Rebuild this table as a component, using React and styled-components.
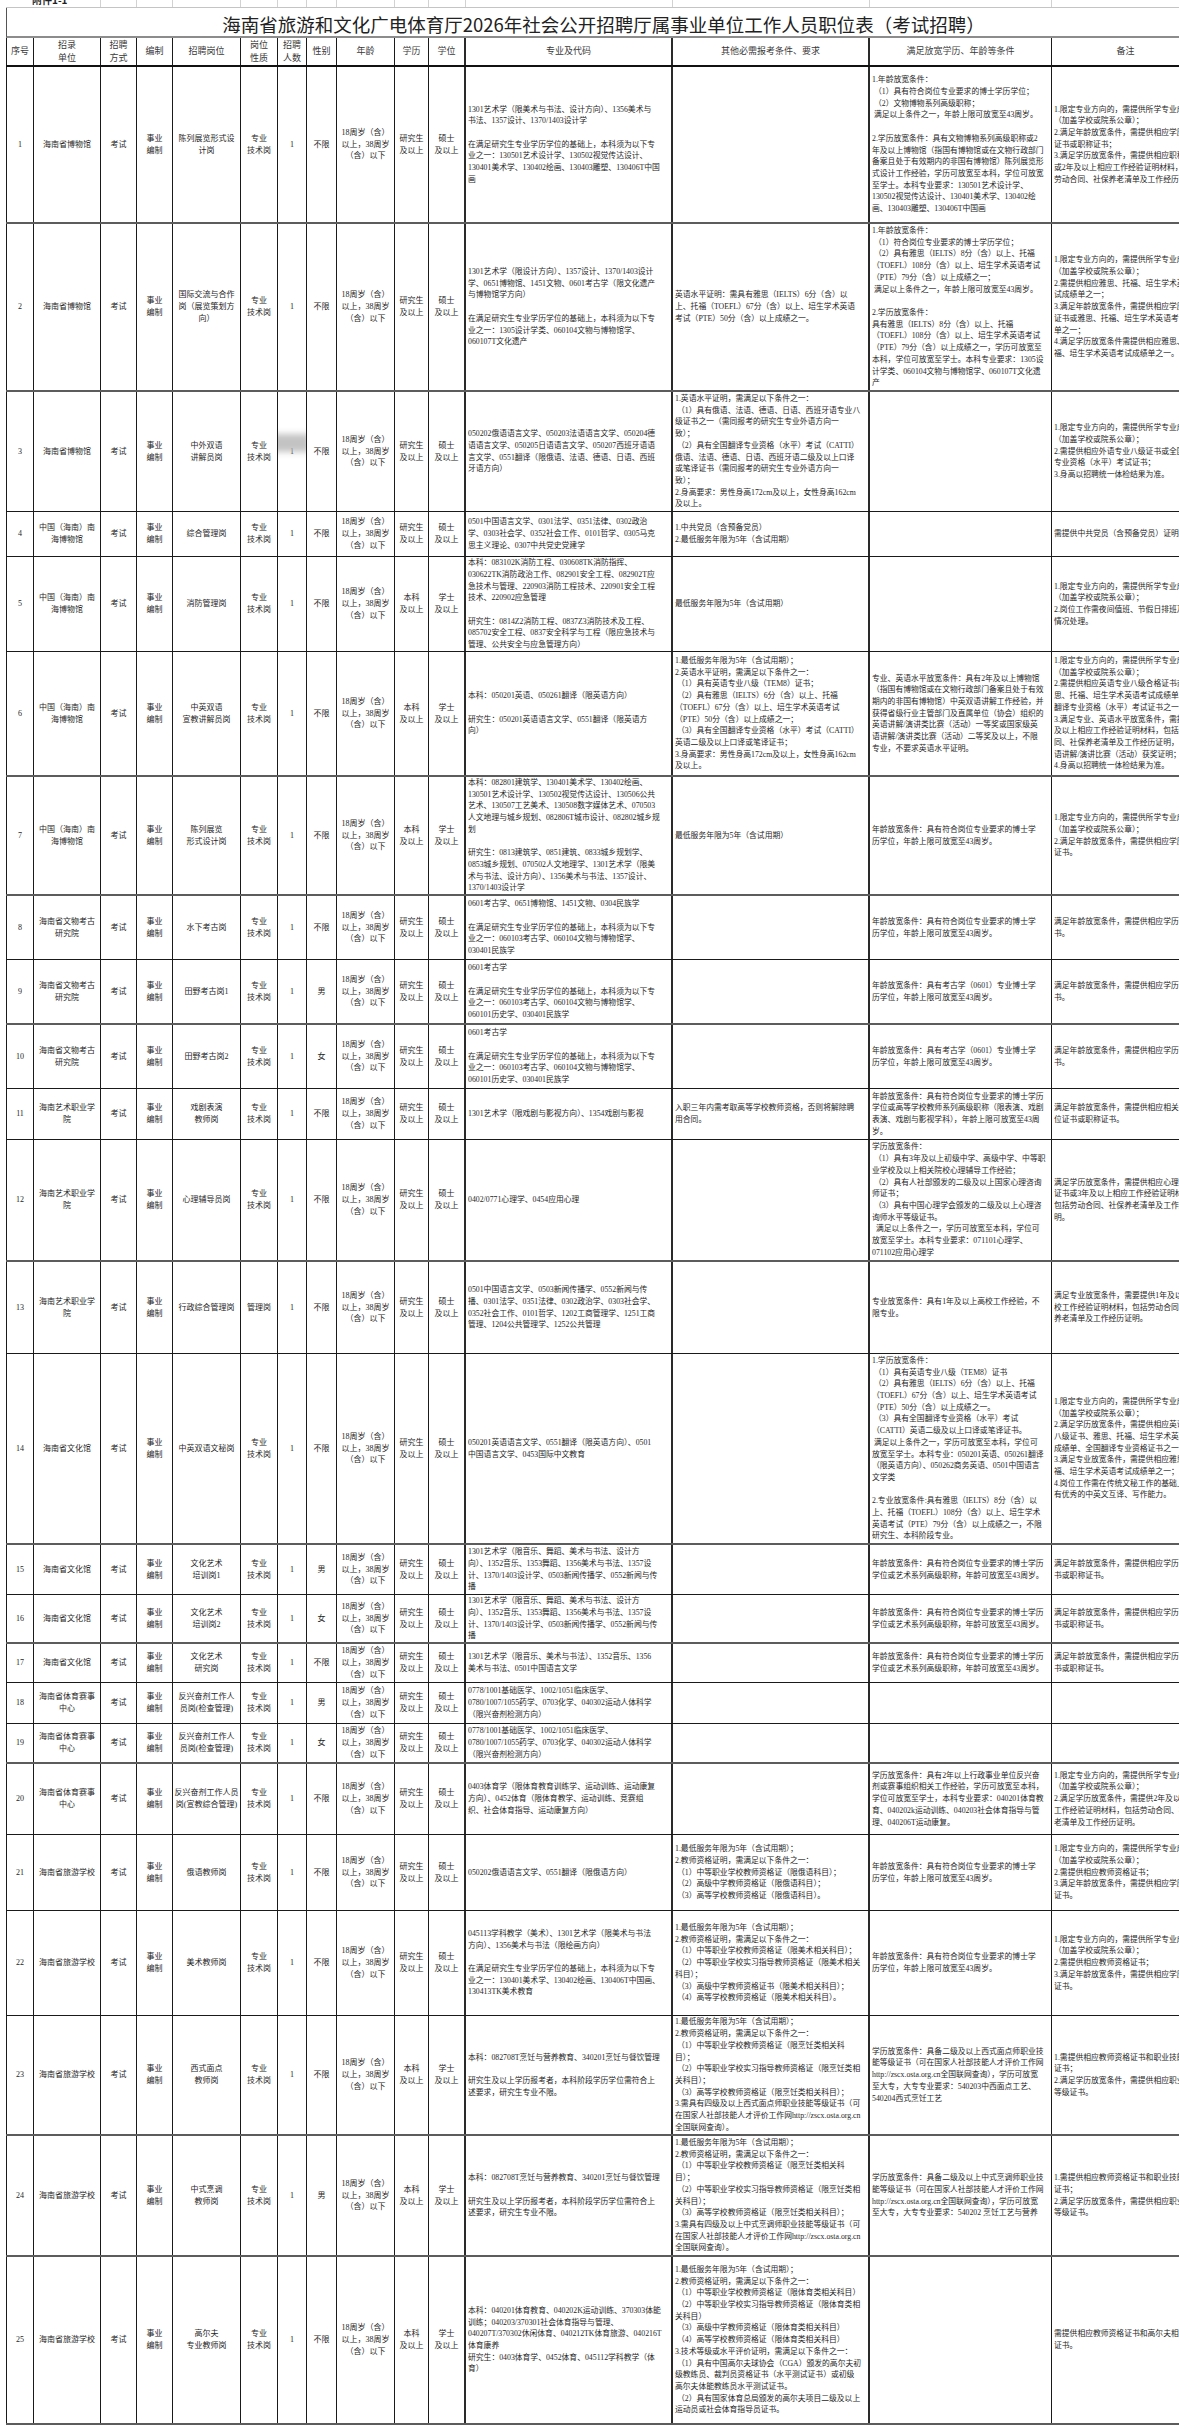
import React from "react";
import styled, { createGlobalStyle } from "styled-components";

const COLS = [28, 67, 36, 36, 68, 37, 29, 30, 58, 34, 37, 207, 197, 182, 148];
const GRID = COLS.map((w) => `${w}px`).join(" ");
const LINE = "#1a1a1a";

const GlobalStyle = createGlobalStyle`
  html, body {
    margin: 0;
    padding: 0;
    background: #fff;
  }
  #root {
    width: 1179px;
    overflow: hidden;
  }
`;

const Page = styled.div`
  width: 1179px;
  height: 2427px;
  overflow: hidden;
  background: #fff;
  color: #1f1f1f;
`;

const Sheet = styled.div`
  margin-left: 6px;
  width: 1194px;
  font-family: "Liberation Serif", "Noto Sans CJK SC", serif;
`;

const TopRow = styled.div`
  display: grid;
  grid-template-columns: ${GRID};
  height: 8px;
  overflow: hidden;
  border-bottom: 1px solid #c4c4c4;
  box-sizing: border-box;
`;

const TopCell = styled.div`
  grid-column: span ${(p) => p.span || 1};
  border-right: 1px solid #d2d2d2;
  display: flex;
  align-items: flex-end;
  overflow: hidden;
  padding-left: 26px;
  font-family: "Noto Sans CJK SC", sans-serif;
  font-weight: 700;
  font-size: 10px;
  line-height: 14px;
  white-space: nowrap;
`;

const TitleRow = styled.div`
  height: 30px;
  box-sizing: border-box;
  display: flex;
  align-items: flex-end;
  justify-content: center;
  border-left: 1px solid #555;
  border-bottom: 2px solid #8c8c8c;
  overflow: hidden;
`;

const Title = styled.h1`
  margin: 0;
  font-family: "Noto Sans CJK SC", sans-serif;
  font-weight: 400;
  font-size: 18.5px;
  line-height: 23px;
  color: #222;
  white-space: nowrap;
`;

const Row = styled.div`
  display: grid;
  grid-template-columns: ${GRID};
  height: ${(p) => p.h}px;
  box-sizing: border-box;
  border-bottom: ${(p) => (p.thick ? "2px solid #5c5c5c" : `1px solid ${LINE}`)};
`;

const HeadRow = styled(Row)`
  border-bottom: 2px solid #111;
`;

const Cell = styled.div`
  position: relative;
  box-sizing: border-box;
  display: flex;
  align-items: center;
  justify-content: ${(p) => (p.text ? "flex-start" : "center")};
  text-align: ${(p) => (p.text ? "left" : "center")};
  padding: ${(p) => (p.text ? "0 0 0 2px" : "0")};
  border-right: ${(p) => (p.heavy ? "2px solid #2a2a2a" : `1px solid ${LINE}`)};
  border-left: ${(p) => (p.first ? `1px solid ${LINE}` : "none")};
  overflow: hidden;
  white-space: pre;
  font-size: ${(p) => (p.text ? "7.8px" : "8px")};
  line-height: 11.7px;
  color: #262626;
`;

const HeadCell = styled(Cell)`
  font-family: "Noto Sans CJK SC", sans-serif;
  font-size: 9px;
  line-height: 12.5px;
  color: #3a3a3a;
  justify-content: center;
  text-align: center;
  padding: 0;
`;

const Smudge = styled.span`
  position: absolute;
  left: -14px;
  top: 42px;
  width: 46px;
  height: 18px;
  background: #b9b9b9;
  filter: blur(3px);
  opacity: 0.85;
`;

const L = (...lines) => lines.join("\n");

const AGE = L("18周岁（含）", "以上，38周岁", "（含）以下");
const BZ = L("事业", "编制");
const ZJ = L("专业", "技术岗");
const YJS = L("研究生", "及以上");
const SS = L("硕士", "及以上");
const BK = L("本科", "及以上");
const XS = L("学士", "及以上");
const N1 = ["1.限定专业方向的，需提供所学专业成绩单", "（加盖学校或院系公章）；"];

const RELAX_DR = L("年龄放宽条件：具有符合岗位专业要求的博士学", "历学位，年龄上限可放宽至43周岁。");
const RELAX_ART = L("年龄放宽条件：具有符合岗位专业要求的博士学历", "学位或艺术系列高级职称，年龄可放宽至43周岁。");
const RELAX_KG = L("年龄放宽条件：具有考古学（0601）专业博士学", "历学位，年龄上限可放宽至43周岁。");
const NOTE_AGE = L("满足年龄放宽条件，需提供相应学历学位证", "书。");
const NOTE_ART = L("满足年龄放宽条件，需提供相应学历学位证", "书或职称证书。");

const MAJOR_KG = L(
  "0601考古学",
  "",
  "在满足研究生专业学历学位的基础上，本科须为以下专",
  "业之一：060103考古学、060104文物与博物馆学、",
  "060101历史学、030401民族学"
);
const MAJOR_ART = L(
  "1301艺术学（限音乐、舞蹈、美术与书法、设计方",
  "向）、1352音乐、1353舞蹈、1356美术与书法、1357设",
  "计、1370/1403设计学、0503新闻传播学、0552新闻与传",
  "播"
);
const MAJOR_DOPING = L(
  "0778/1001基础医学、1002/1051临床医学、",
  "0780/1007/1055药学、0703化学、040302运动人体科学",
  "（限兴奋剂检测方向）"
);
const MAJOR_COOK = L(
  "本科：082708T烹饪与营养教育、340201烹饪与餐饮管理",
  "",
  "研究生及以上学历报考者，本科阶段学历学位需符合上",
  "述要求，研究生专业不限。"
);
const COOK_OTHER = (kind) =>
  L(
    "1.最低服务年限为5年（含试用期）；",
    "2.教师资格证明，需满足以下条件之一：",
    " （1）中等职业学校教师资格证（限烹饪类相关科",
    "目）；",
    " （2）中等职业学校实习指导教师资格证（限烹饪类相",
    "关科目）；",
    " （3）高等学校教师资格证（限烹饪类相关科目）；",
    `3.需具有四级及以上${kind}职业技能等级证书（可`,
    "在国家人社部技能人才评价工作网http://zscx.osta.org.cn",
    "全国联网查询）。"
  );
const NOTE_COOK = L("1.需提供相应教师资格证书和职业技能等级", "证书；", "2.满足学历放宽条件，需提供相应职业技能", "等级证书。");
const NOTE_TEACH = L(...N1, "2.需提供相应教师资格证书；", "3.满足年龄放宽条件，需提供相应学历学位", "证书。");

const HEAD = ["序号", L("招录", "单位"), L("招聘", "方式"), "编制", "招聘岗位", L("岗位", "性质"), L("招聘", "人数"), "性别", "年龄", "学历", "学位", "专业及代码", "其他必需报考条件、要求", "满足放宽学历、年龄等条件", "备注"];

const ROWS = [
  {
    h: 157, thick: true,
    c: ["1", "海南省博物馆", "考试", BZ, L("陈列展览形式设", "计岗"), ZJ, "1", "不限", AGE, YJS, SS,
      L("1301艺术学（限美术与书法、设计方向）、1356美术与", "书法、1357设计、1370/1403设计学", "", "在满足研究生专业学历学位的基础上，本科须为以下专", "业之一：130501艺术设计学、130502视觉传达设计、", "130401美术学、130402绘画、130403雕塑、130406T中国", "画"),
      "",
      L("1.年龄放宽条件：", " （1）具有符合岗位专业要求的博士学历学位；", " （2）文物博物系列高级职称；", " 满足以上条件之一，年龄上限可放宽至43周岁。", "", "2.学历放宽条件：具有文物博物系列高级职称或2", "年及以上博物馆（指国有博物馆或在文物行政部门", "备案且处于有效期内的非国有博物馆）陈列展览形", "式设计工作经验，学历可放宽至本科，学位可放宽", "至学士。本科专业要求：130501艺术设计学、", "130502视觉传达设计、130401美术学、130402绘", "画、130403雕塑、130406T中国画"),
      L(...N1, "2.满足年龄放宽条件，需提供相应学历学位", "证书或职称证书；", "3.满足学历放宽条件，需提供相应职称证书", "或2年及以上相应工作经验证明材料，包括", "劳动合同、社保养老清单及工作经历证明。")],
  },
  {
    h: 168, thick: true,
    c: ["2", "海南省博物馆", "考试", BZ, L("国际交流与合作", "岗（展览策划方", "向）"), ZJ, "1", "不限", AGE, YJS, SS,
      L("1301艺术学（限设计方向）、1357设计、1370/1403设计", "学、0651博物馆、1451文物、0601考古学（限文化遗产", "与博物馆学方向）", "", "在满足研究生专业学历学位的基础上，本科须为以下专", "业之一：1305设计学类、060104文物与博物馆学、", "060107T文化遗产"),
      L("英语水平证明：需具有雅思（IELTS）6分（含）以", "上、托福（TOEFL）67分（含）以上、培生学术英语", "考试（PTE）50分（含）以上成绩之一。"),
      L("1.年龄放宽条件：", " （1）符合岗位专业要求的博士学历学位；", " （2）具有雅思（IELTS）8分（含）以上、托福", "（TOEFL）108分（含）以上、培生学术英语考试", "（PTE）79分（含）以上成绩之一；", " 满足以上条件之一，年龄上限可放宽至43周岁。", "", "2.学历放宽条件：", "具有雅思（IELTS）8分（含）以上、托福", "（TOEFL）108分（含）以上、培生学术英语考试", "（PTE）79分（含）以上成绩之一，学历可放宽至", "本科，学位可放宽至学士。本科专业要求：1305设", "计学类、060104文物与博物馆学、060107T文化遗", "产"),
      L(...N1, "2.需提供相应雅思、托福、培生学术英语考", "试成绩单之一；", "3.满足年龄放宽条件，需提供相应学历学位", "证书或雅思、托福、培生学术英语考试成绩", "单之一；", "4.满足学历放宽条件需提供相应雅思、托", "福、培生学术英语考试成绩单之一。")],
  },
  {
    h: 120, smudge: true,
    c: ["3", "海南省博物馆", "考试", BZ, L("中外双语", "讲解员岗"), ZJ, "1", "不限", AGE, YJS, SS,
      L("050202俄语语言文学、050203法语语言文学、050204德", "语语言文学、050205日语语言文学、050207西班牙语语", "言文学、0551翻译（限俄语、法语、德语、日语、西班", "牙语方向）"),
      L("1.英语水平证明，需满足以下条件之一：", " （1）具有俄语、法语、德语、日语、西班牙语专业八", "级证书之一（需同报考的研究生专业外语方向一", "致）；", " （2）具有全国翻译专业资格（水平）考试（CATTI）", "俄语、法语、德语、日语、西班牙语二级及以上口译", "或笔译证书（需同报考的研究生专业外语方向一", "致）；", "2.身高要求：男性身高172cm及以上，女性身高162cm", "及以上。"),
      "",
      L(...N1, "2.需提供相应外语专业八级证书或全国翻译", "专业资格（水平）考试证书；", "3.身高以招聘统一体检结果为准。")],
  },
  {
    h: 45,
    c: ["4", L("中国（海南）南", "海博物馆"), "考试", BZ, "综合管理岗", ZJ, "1", "不限", AGE, YJS, SS,
      L("0501中国语言文学、0301法学、0351法律、0302政治", "学、0303社会学、0352社会工作、0101哲学、0305马克", "思主义理论、0307中共党史党建学"),
      L("1.中共党员（含预备党员）", "2.最低服务年限为5年（含试用期）"),
      "",
      "需提供中共党员（含预备党员）证明材料。"],
  },
  {
    h: 95,
    c: ["5", L("中国（海南）南", "海博物馆"), "考试", BZ, "消防管理岗", ZJ, "1", "不限", AGE, BK, XS,
      L("本科：083102K消防工程、030608TK消防指挥、", "030622TK消防政治工作、082901安全工程、082902T应", "急技术与管理、220903消防工程技术、220901安全工程", "技术、220902应急管理", "", "研究生：0814Z2消防工程、0837Z3消防技术及工程、", "085702安全工程、0837安全科学与工程（限应急技术与", "管理、公共安全与应急管理方向）"),
      "最低服务年限为5年（含试用期）",
      "",
      L(...N1, "2.岗位工作需夜间值班、节假日排班及突发", "情况处理。")],
  },
  {
    h: 125, thick: true,
    c: ["6", L("中国（海南）南", "海博物馆"), "考试", BZ, L("中英双语", "宣教讲解员岗"), ZJ, "1", "不限", AGE, BK, XS,
      L("本科：050201英语、050261翻译（限英语方向）", "", "研究生：050201英语语言文学、0551翻译（限英语方", "向）"),
      L("1.最低服务年限为5年（含试用期）；", "2.英语水平证明，需满足以下条件之一：", " （1）具有英语专业八级（TEM8）证书；", " （2）具有雅思（IELTS）6分（含）以上、托福", "（TOEFL）67分（含）以上、培生学术英语考试", "（PTE）50分（含）以上成绩之一；", " （3）具有全国翻译专业资格（水平）考试（CATTI）", "英语二级及以上口译或笔译证书；", "3.身高要求：男性身高172cm及以上，女性身高162cm", "及以上。"),
      L("专业、英语水平放宽条件：具有2年及以上博物馆", "（指国有博物馆或在文物行政部门备案且处于有效", "期内的非国有博物馆）中英双语讲解工作经验，并", "获得省级行业主管部门及直属单位（协会）组织的", "英语讲解/演讲类比赛（活动）一等奖或国家级英", "语讲解/演讲类比赛（活动）二等奖及以上，不限", "专业，不要求英语水平证明。"),
      L(...N1, "2.需提供相应英语专业八级合格证书或雅", "思、托福、培生学术英语考试成绩单或全国", "翻译专业资格（水平）考试证书之一；", "3.满足专业、英语水平放宽条件，需提供2年", "及以上相应工作经验证明材料，包括劳动合", "同、社保养老清单及工作经历证明，以及英", "语讲解/演讲比赛（活动）获奖证明；", "4.身高以招聘统一体检结果为准。")],
  },
  {
    h: 119, thick: true,
    c: ["7", L("中国（海南）南", "海博物馆"), "考试", BZ, L("陈列展览", "形式设计岗"), ZJ, "1", "不限", AGE, BK, XS,
      L("本科：082801建筑学、130401美术学、130402绘画、", "130501艺术设计学、130502视觉传达设计、130506公共", "艺术、130507工艺美术、130508数字媒体艺术、070503", "人文地理与城乡规划、082806T城市设计、082802城乡规", "划", "", "研究生：0813建筑学、0851建筑、0833城乡规划学、", "0853城乡规划、070502人文地理学、1301艺术学（限美", "术与书法、设计方向）、1356美术与书法、1357设计、", "1370/1403设计学"),
      "最低服务年限为5年（含试用期）",
      RELAX_DR,
      L(...N1, "2.满足年龄放宽条件，需提供相应学历学位", "证书。")],
  },
  {
    h: 64,
    c: ["8", L("海南省文物考古", "研究院"), "考试", BZ, "水下考古岗", ZJ, "1", "不限", AGE, YJS, SS,
      L("0601考古学、0651博物馆、1451文物、0304民族学", "", "在满足研究生专业学历学位的基础上，本科须为以下专", "业之一：060103考古学、060104文物与博物馆学、", "030401民族学"),
      "", RELAX_DR, NOTE_AGE],
  },
  {
    h: 65, thick: true,
    c: ["9", L("海南省文物考古", "研究院"), "考试", BZ, "田野考古岗1", ZJ, "1", "男", AGE, YJS, SS, MAJOR_KG, "", RELAX_KG, NOTE_AGE],
  },
  {
    h: 64,
    c: ["10", L("海南省文物考古", "研究院"), "考试", BZ, "田野考古岗2", ZJ, "1", "女", AGE, YJS, SS, MAJOR_KG, "", RELAX_KG, NOTE_AGE],
  },
  {
    h: 51,
    c: ["11", L("海南艺术职业学", "院"), "考试", BZ, L("戏剧表演", "教师岗"), ZJ, "1", "不限", AGE, YJS, SS,
      "1301艺术学（限戏剧与影视方向）、1354戏剧与影视",
      L("入职三年内需考取高等学校教师资格，否则将解除聘", "用合同。"),
      L("年龄放宽条件：具有符合岗位专业要求的博士学历", "学位或高等学校教师系列高级职称（限表演、戏剧", "表演、戏剧与影视学科），年龄上限可放宽至43周", "岁。"),
      L("满足年龄放宽条件，需提供相应相关学历学", "位证书或职称证书。")],
  },
  {
    h: 122, thick: true,
    c: ["12", L("海南艺术职业学", "院"), "考试", BZ, "心理辅导员岗", ZJ, "1", "不限", AGE, YJS, SS,
      "0402/0771心理学、0454应用心理",
      "",
      L("学历放宽条件：", " （1）具有3年及以上初级中学、高级中学、中等职", "业学校及以上相关院校心理辅导工作经验；", " （2）具有人社部颁发的二级及以上国家心理咨询", "师证书；", " （3）具有中国心理学会颁发的二级及以上心理咨", "询师水平等级证书。", "  满足以上条件之一，学历可放宽至本科，学位可", "放宽至学士。本科专业要求：071101心理学、", "071102应用心理学"),
      L("满足学历放宽条件，需提供相应心理咨询师", "证书或3年及以上相应工作经验证明材料，", "包括劳动合同、社保养老清单及工作经历证", "明。")],
  },
  {
    h: 92,
    c: ["13", L("海南艺术职业学", "院"), "考试", BZ, "行政综合管理岗", "管理岗", "1", "不限", AGE, YJS, SS,
      L("0501中国语言文学、0503新闻传播学、0552新闻与传", "播、0301法学、0351法律、0302政治学、0303社会学、", "0352社会工作、0101哲学、1202工商管理学、1251工商", "管理、1204公共管理学、1252公共管理"),
      "",
      L("专业放宽条件：具有1年及以上高校工作经验，不", "限专业。"),
      L("满足专业放宽条件，需要提供1年及以上高", "校工作经验证明材料，包括劳动合同、社保", "养老清单及工作经历证明。")],
  },
  {
    h: 191, thick: true,
    c: ["14", "海南省文化馆", "考试", BZ, "中英双语文秘岗", ZJ, "1", "不限", AGE, YJS, SS,
      L("050201英语语言文学、0551翻译（限英语方向）、0501", "中国语言文学、0453国际中文教育"),
      "",
      L("1.学历放宽条件：", " （1）具有英语专业八级（TEM8）证书", " （2）具有雅思（IELTS）6分（含）以上、托福", "（TOEFL）67分（含）以上、培生学术英语考试", "（PTE）50分（含）以上成绩之一。", " （3）具有全国翻译专业资格（水平）考试", "（CATTI）英语二级及以上口译或笔译证书。", " 满足以上条件之一，学历可放宽至本科，学位可", "放宽至学士。本科专业：050201英语、050261翻译", "（限英语方向）、050262商务英语、0501中国语言", "文学类", "", "2.专业放宽条件:具有雅思（IELTS）8分（含）以", "上、托福（TOEFL）108分（含）以上、培生学术", "英语考试（PTE）79分（含）以上成绩之一，不限", "研究生、本科阶段专业。"),
      L(...N1, "2.满足学历放宽条件，需提供相应英语专业", "八级证书、雅思、托福、培生学术英语考试", "成绩单、全国翻译专业资格证书之一；", "3.满足专业放宽条件，需提供相应雅思、托", "福、培生学术英语考试成绩单之一；", "4.岗位工作需在传统文秘工作的基础上，具", "有优秀的中英文互译、写作能力。")],
  },
  {
    h: 50,
    c: ["15", "海南省文化馆", "考试", BZ, L("文化艺术", "培训岗1"), ZJ, "1", "男", AGE, YJS, SS, MAJOR_ART, "", RELAX_ART, NOTE_ART],
  },
  {
    h: 49, thick: true,
    c: ["16", "海南省文化馆", "考试", BZ, L("文化艺术", "培训岗2"), ZJ, "1", "女", AGE, YJS, SS, MAJOR_ART, "", RELAX_ART, NOTE_ART],
  },
  {
    h: 39,
    c: ["17", "海南省文化馆", "考试", BZ, L("文化艺术", "研究岗"), ZJ, "1", "不限", AGE, YJS, SS,
      L("1301艺术学（限音乐、美术与书法）、1352音乐、1356", "美术与书法、0501中国语言文学"), "", RELAX_ART, NOTE_ART],
  },
  {
    h: 41,
    c: ["18", L("海南省体育赛事", "中心"), "考试", BZ, L("反兴奋剂工作人", "员岗(检查管理)"), ZJ, "1", "男", AGE, YJS, SS, MAJOR_DOPING, "", "", ""],
  },
  {
    h: 40, thick: true,
    c: ["19", L("海南省体育赛事", "中心"), "考试", BZ, L("反兴奋剂工作人", "员岗(检查管理)"), ZJ, "1", "女", AGE, YJS, SS, MAJOR_DOPING, "", "", ""],
  },
  {
    h: 71,
    c: ["20", L("海南省体育赛事", "中心"), "考试", BZ, L("反兴奋剂工作人员", "岗(宣教综合管理)"), ZJ, "1", "不限", AGE, YJS, SS,
      L("0403体育学（限体育教育训练学、运动训练、运动康复", "方向）、0452体育（限体育教学、运动训练、竞赛组", "织、社会体育指导、运动康复方向）"),
      "",
      L("学历放宽条件：具有2年以上行政事业单位反兴奋", "剂或赛事组织相关工作经验，学历可放宽至本科，", "学位可放宽至学士，本科专业要求：040201体育教", "育、040202k运动训练、040203社会体育指导与管", "理、040206T运动康复。"),
      L(...N1, "2.满足学历放宽条件，需提供2年及以上相应", "工作经验证明材料，包括劳动合同、社保养", "老清单及工作经历证明。")],
  },
  {
    h: 76,
    c: ["21", "海南省旅游学校", "考试", BZ, "俄语教师岗", ZJ, "1", "不限", AGE, YJS, SS,
      "050202俄语语言文学、0551翻译（限俄语方向）",
      L("1.最低服务年限为5年（含试用期）；", "2.教师资格证明，需满足以下条件之一：", " （1）中等职业学校教师资格证（限俄语科目）；", " （2）高级中学教师资格证（限俄语科目）；", " （3）高等学校教师资格证（限俄语科目）。"),
      RELAX_DR, NOTE_TEACH],
  },
  {
    h: 105,
    c: ["22", "海南省旅游学校", "考试", BZ, "美术教师岗", ZJ, "1", "不限", AGE, YJS, SS,
      L("045113学科教学（美术）、1301艺术学（限美术与书法", "方向）、1356美术与书法（限绘画方向）", "", "在满足研究生专业学历学位的基础上，本科须为以下专", "业之一：130401美术学、130402绘画、130406T中国画、", "130413TK美术教育"),
      L("1.最低服务年限为5年（含试用期）；", "2.教师资格证明，需满足以下条件之一：", " （1）中等职业学校教师资格证（限美术相关科目）；", " （2）中等职业学校实习指导教师资格证（限美术相关", "科目）；", " （3）高级中学教师资格证书（限美术相关科目）；", " （4）高等学校教师资格证（限美术相关科目）。"),
      RELAX_DR, NOTE_TEACH],
  },
  {
    h: 120, thick: true,
    c: ["23", "海南省旅游学校", "考试", BZ, L("西式面点", "教师岗"), ZJ, "1", "不限", AGE, BK, XS,
      MAJOR_COOK, COOK_OTHER("西式面点师"),
      L("学历放宽条件：具备二级及以上西式面点师职业技", "能等级证书（可在国家人社部技能人才评价工作网", "http://zscx.osta.org.cn全国联网查询），学历可放宽", "至大专，大专专业要求：540203中西面点工艺、", "540204西式烹饪工艺"),
      NOTE_COOK],
  },
  {
    h: 121, thick: true,
    c: ["24", "海南省旅游学校", "考试", BZ, L("中式烹调", "教师岗"), ZJ, "1", "男", AGE, BK, XS,
      MAJOR_COOK, COOK_OTHER("中式烹调师"),
      L("学历放宽条件：具备二级及以上中式烹调师职业技", "能等级证书（可在国家人社部技能人才评价工作网", "http://zscx.osta.org.cn全国联网查询），学历可放宽", "至大专，大专专业要求：540202 烹饪工艺与营养"),
      NOTE_COOK],
  },
  {
    h: 168, thick: true,
    c: ["25", "海南省旅游学校", "考试", BZ, L("高尔夫", "专业教师岗"), ZJ, "1", "不限", AGE, BK, XS,
      L("本科：040201体育教育、040202K运动训练、370303体能", "训练；040203/370301社会体育指导与管理、", "040207T/370302休闲体育、040212TK体育旅游、040216T", "体育康养", "研究生：0403体育学、0452体育、045112学科教学（体", "育）"),
      L("1.最低服务年限为5年（含试用期）；", "2.教师资格证明，需满足以下条件之一：", " （1）中等职业学校教师资格证（限体育类相关科目）", " （2）中等职业学校实习指导教师资格证（限体育类相", "关科目）", " （3）高级中学教师资格证（限体育类相关科目）", " （4）高等学校教师资格证（限体育类相关科目）", "3.技术等级或水平评价证明，需满足以下条件之一：", " （1）具有中国高尔夫球协会（CGA）颁发的高尔夫初", "级教练员、裁判员资格证书（水平测试证书）或初级", "高尔夫体能教练员水平测试证书。", " （2）具有国家体育总局颁发的高尔夫项目二级及以上", "运动员或社会体育指导员证书。"),
      "",
      L("需提供相应教师资格证书和高尔夫相关资格", "证书。")],
  },
];

const TEXT_FROM = 11;
const HEAVY = [10, 11, 12];

function TopLine() {
  return (
    <TopRow>
      <TopCell span={2}>附件1-1</TopCell>
      {COLS.slice(2).map((_, i) => (
        <TopCell key={i} />
      ))}
    </TopRow>
  );
}

function Header() {
  return (
    <HeadRow h={29}>
      {HEAD.map((label, i) => (
        <HeadCell key={i} first={i === 0} heavy={HEAVY.includes(i)}>
          {label}
        </HeadCell>
      ))}
    </HeadRow>
  );
}

function PostRow({ row }) {
  return (
    <Row h={row.h} thick={row.thick}>
      {row.c.map((value, i) => (
        <Cell key={i} first={i === 0} text={i >= TEXT_FROM} heavy={HEAVY.includes(i)}>
          {value}
          {row.smudge && i === 6 ? <Smudge /> : null}
        </Cell>
      ))}
    </Row>
  );
}

export default function App() {
  return (
    <Page>
      <GlobalStyle />
      <Sheet>
        <TopLine />
        <TitleRow>
          <Title>海南省旅游和文化广电体育厅2026年社会公开招聘厅属事业单位工作人员职位表（考试招聘）</Title>
        </TitleRow>
        <Header />
        {ROWS.map((row) => (
          <PostRow key={row.c[0]} row={row} />
        ))}
      </Sheet>
    </Page>
  );
}
